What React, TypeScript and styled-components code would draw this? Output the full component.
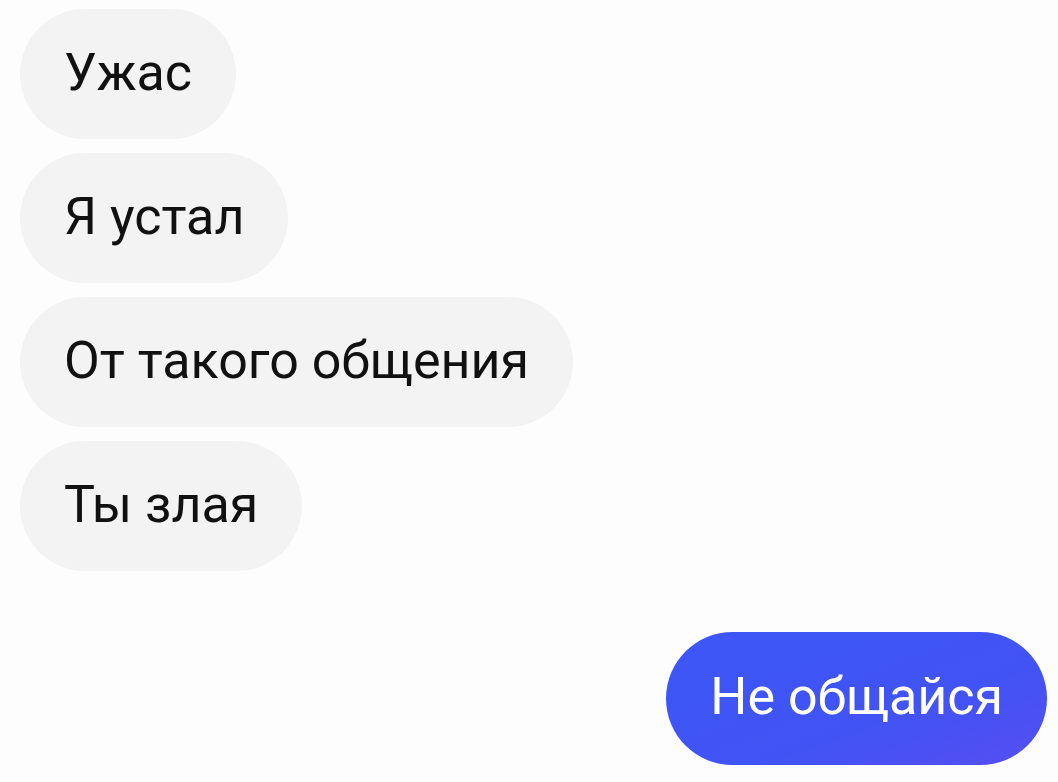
import React from "react"
import styled, { createGlobalStyle } from "styled-components"

const incoming = ["Ужас", "Я устал", "От такого общения", "Ты злая"]

export default function App() {
    return (
        <>
            <GlobalStyle />
            <SChat>
                {incoming.map((text) => (
                    <SBubble key={text}>{text}</SBubble>
                ))}
                <SOutgoing>Не общайся</SOutgoing>
            </SChat>
        </>
    )
}

const GlobalStyle = createGlobalStyle`
    html, body {
        margin: 0;
        background: #fdfdfd;
        font-family: Roboto, "Noto Sans", sans-serif;
    }
`

const SChat = styled.div`
    display: flex;
    flex-direction: column;
    align-items: flex-start;
    gap: 14px;
    padding: 9px 11px 0 20px;
    height: 782px;
    box-sizing: border-box;
    overflow: hidden;
`

const SBubble = styled.div`
    display: flex;
    align-items: center;
    box-sizing: border-box;
    height: 130px;
    padding: 0 44px 4px 44px;
    border-radius: 65px;
    background: #f3f3f3;
    color: #111;
    font-size: 52px;
    white-space: nowrap;
`

const SOutgoing = styled(SBubble)`
    align-self: flex-end;
    margin-top: 47px;
    height: 133px;
    border-radius: 67px;
    background: linear-gradient(160deg, #3c57f6 0%, #4153f4 60%, #564ef2 100%);
    color: #fff;
`
